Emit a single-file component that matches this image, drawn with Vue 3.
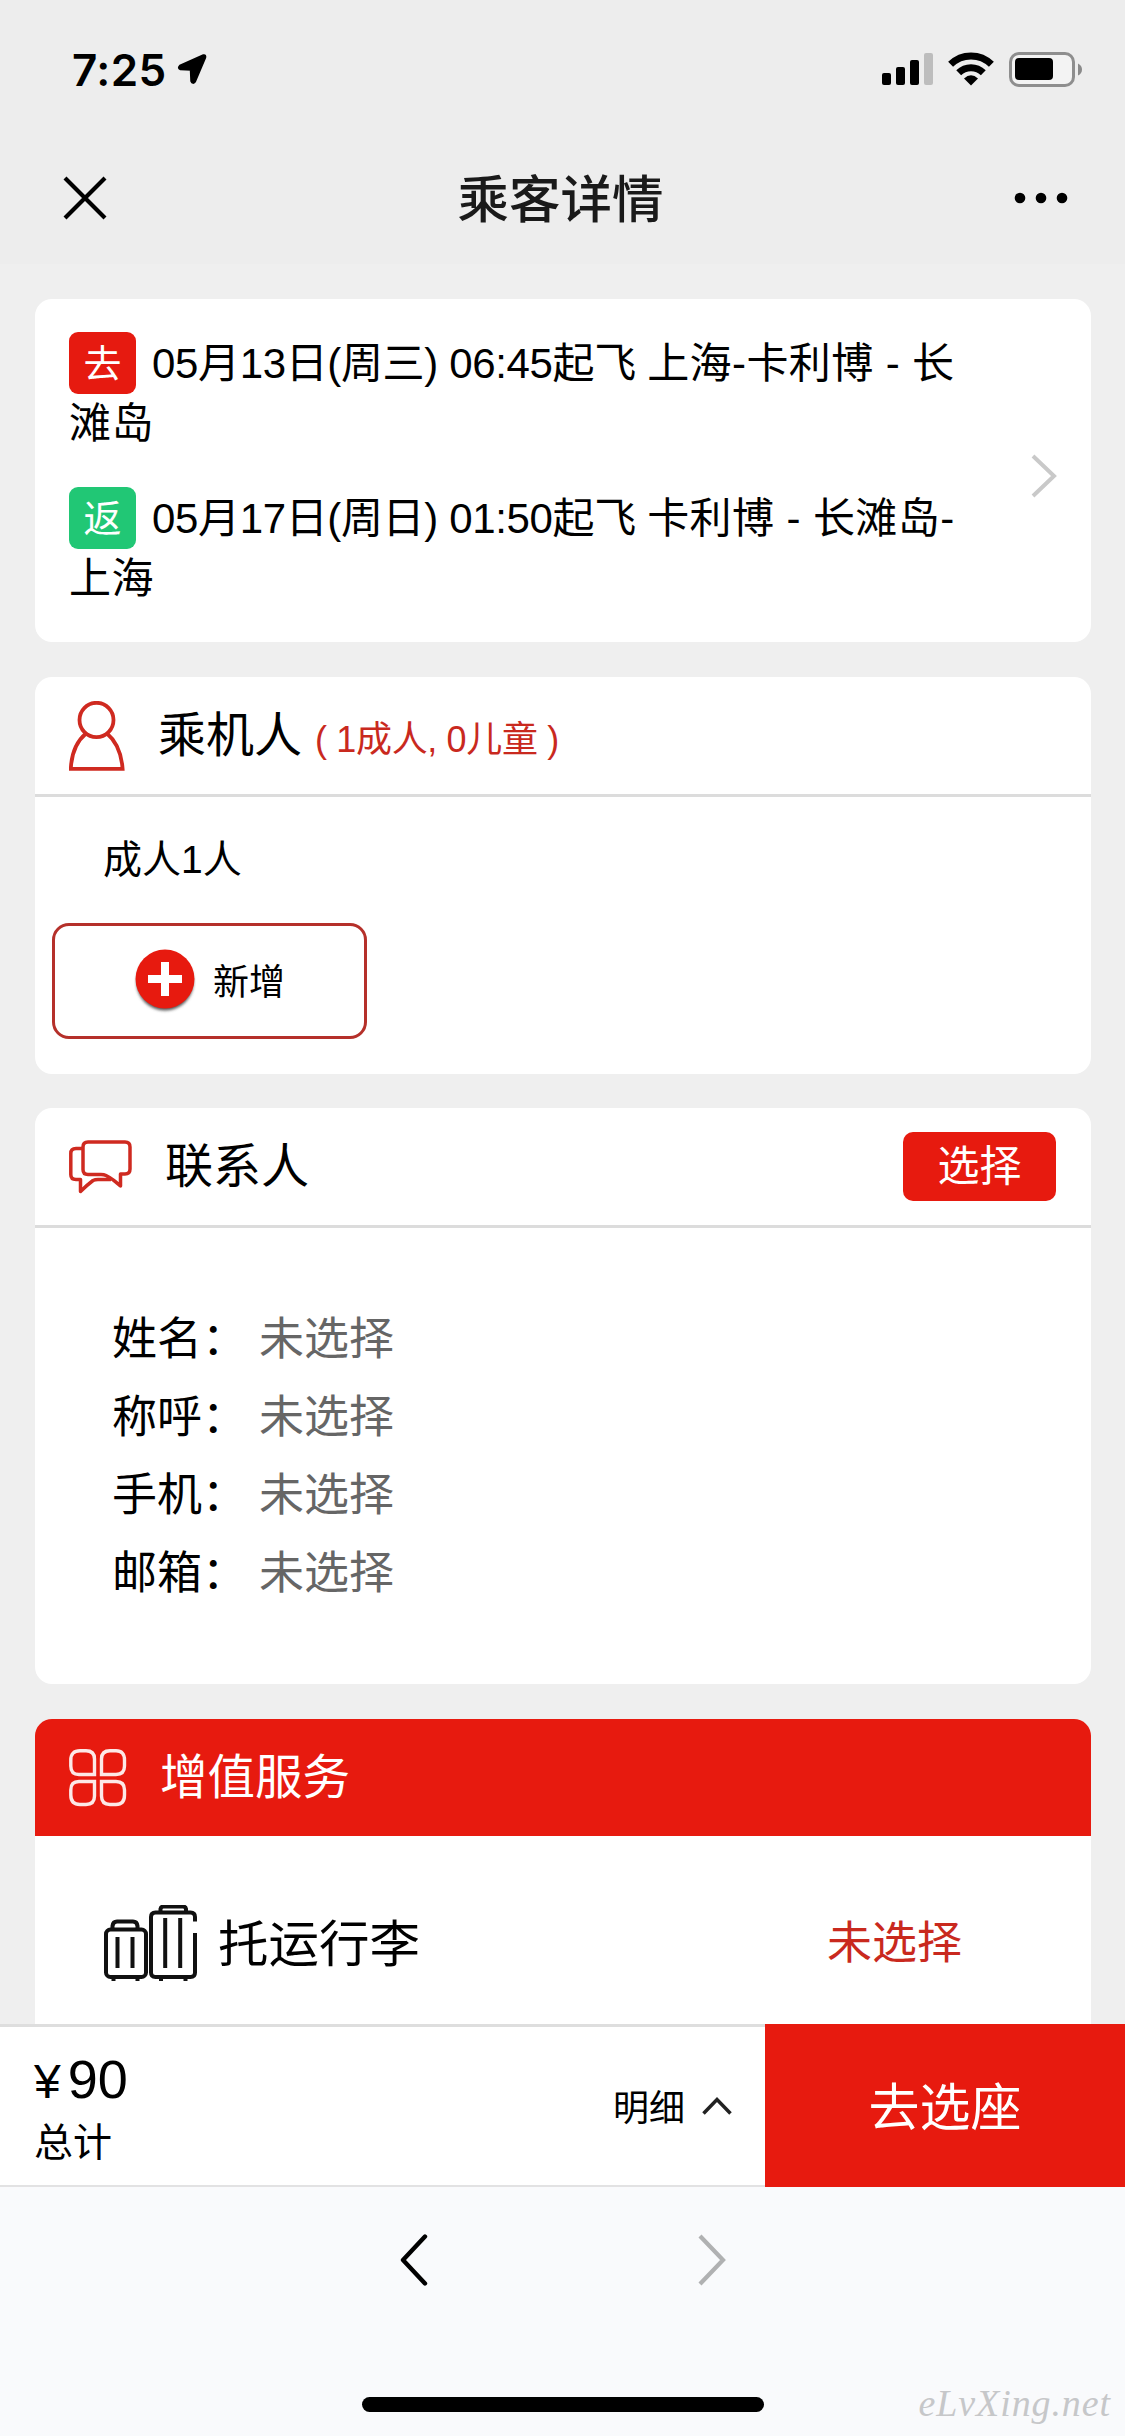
<script setup>
const flights = [
  { tag: '去', kind: 'out', time: '05月13日(周三) 06:45起飞 ', route: '上海-卡利博 - 长滩岛' },
  { tag: '返', kind: 'back', time: '05月17日(周日) 01:50起飞 ', route: '卡利博 - 长滩岛-上海' },
]
const contactRows = ['姓名', '称呼', '手机', '邮箱']
</script>

<template>
  <div class="screen">
    <header class="top">
      <div class="status">
        <div class="status-left">
          <span class="time">7:25</span>
          <svg class="locate" width="30" height="32" viewBox="0 0 30 32">
            <path d="M26.5 2.5 L3 13 Q1 15.2 3.5 16 L14 16.500 L14.500 28 Q15.800 31 17.800 28.500 L28 4.500 Q28.500 2 26.500 2.500Z" fill="#000" stroke="#000" stroke-width="2.500" stroke-linejoin="round" />
          </svg>
        </div>
        <div class="status-right">
          <svg width="52" height="34" viewBox="0 0 52 34">
            <rect x="0" y="21" width="9" height="12" rx="2" />
            <rect x="14" y="15" width="9" height="18" rx="2" />
            <rect x="28" y="8" width="9" height="25" rx="2" />
            <rect x="42" y="1" width="9" height="32" rx="2" fill="#bdbdbd" />
          </svg>
          <svg class="wifi" width="46" height="34" viewBox="0 0 46 34">
            <g fill="none" stroke="#000" stroke-width="7">
              <path d="M2.600 12.300 A29 29 0 0 1 43.400 12.300" />
              <path d="M10.700 20.800 A17.600 17.600 0 0 1 35.300 20.800" />
            </g>
            <path d="M23 33.500 L16 26.500 Q23 20 30 26.500Z" />
          </svg>
          <svg width="74" height="36" viewBox="0 0 74 36">
            <rect x="1.500" y="1.500" width="63" height="32" rx="8.500" fill="#f3f3f3" stroke="#8e8e8e" stroke-width="3" />
            <rect x="6" y="6" width="38" height="22" rx="4" />
            <path d="M69 11.500 Q73 13.500 73 17.500 T69 23.500Z" fill="#8a8a8a" />
          </svg>
        </div>
      </div>
      <div class="nav">
        <svg width="44" height="44" viewBox="0 0 44 44">
          <path d="M2 2 L42 42 M42 2 L2 42" stroke="#000" stroke-width="4.200" />
        </svg>
        <h1>乘客详情</h1>
        <svg width="54" height="12" viewBox="0 0 54 12">
          <circle cx="6" cy="6" r="5.300" /><circle cx="27" cy="6" r="5.300" /><circle cx="48" cy="6" r="5.300" />
        </svg>
      </div>
    </header>

    <main class="content">
      <section class="card flights">
        <div class="legs">
          <p v-for="f in flights" :key="f.tag" class="leg">
            <span class="tag" :class="f.kind">{{ f.tag }}</span><span class="when">{{ f.time }}</span><span class="route">{{ f.route }}</span>
          </p>
        </div>
        <svg class="more" width="26" height="44" viewBox="0 0 26 44">
          <path d="M2 2 L23 22 L2 42" fill="none" stroke="#c9c9c9" stroke-width="4" />
        </svg>
      </section>

      <section class="card passengers">
        <div class="head">
          <svg class="icon-person" width="56" height="70" viewBox="0 0 56 70" fill="none" stroke="#cf2a20" stroke-width="3.800">
            <ellipse cx="27.500" cy="19" rx="17" ry="17.200" />
            <path d="M17 32.500 C8 40 2.500 53 1.800 67.800 H53.600 C52.500 53 47 40 38 32.500" />
          </svg>
          <h2>乘机人</h2>
          <span class="count">( 1成人, 0儿童 )</span>
        </div>
        <p class="group">成人1人</p>
        <button class="add">
          <svg width="62" height="66" viewBox="0 0 62 66">
            <defs>
              <filter id="soft" x="-20%" y="-20%" width="140%" height="140%"><feGaussianBlur stdDeviation="1.500" /></filter>
            </defs>
            <circle cx="31" cy="34" r="28.500" fill="#555" filter="url(#soft)" />
            <circle cx="31" cy="31" r="29.500" fill="#e71a0f" />
            <path d="M31 14 V48 M14 31 H48" stroke="#fff" stroke-width="8" />
          </svg>
          <span>新增</span>
        </button>
      </section>

      <section class="card contact">
        <div class="head">
          <svg class="icon-chat" width="64" height="54" viewBox="0 0 64 54" fill="none" stroke="#cf2a20" stroke-width="3.500" stroke-linejoin="round">
            <path d="M19 2 H56 Q61 2 61 7 V29 Q61 34 56 34 H51.500 V46 Q44 39 37 35.500 Q35 34.500 32 34.500 H19 Q14 34.500 14 29.500 V7 Q14 2 19 2Z" />
            <path d="M14 8.500 H7 Q1.800 8.500 1.800 13.500 V34.500 Q1.800 39.500 7 39.500 H11.500 V51.500 Q18 45 24 40.500 Q26 39.500 29 39.500 H42" />
          </svg>
          <h2>联系人</h2>
          <button class="pick">选择</button>
        </div>
        <dl>
          <div v-for="r in contactRows" :key="r" class="row">
            <dt>{{ r }}：</dt>
            <dd>未选择</dd>
          </div>
        </dl>
      </section>

      <section class="card extras">
        <div class="head red">
          <svg class="icon-grid" width="58" height="58" viewBox="0 0 58 58" fill="none" stroke="#fff" stroke-width="3.400" stroke-opacity=".9">
            <path d="M11 1.800 H17 Q25.500 1.800 25.500 10 V25.500 H10 Q1.800 25.500 1.800 17 V11 Q1.800 1.800 11 1.800Z" />
            <path d="M47 1.800 H41 Q32.500 1.800 32.500 10 V25.500 H47 Q55.500 25.500 55.500 17 V11 Q55.500 1.800 47 1.800Z" />
            <path d="M11 55.500 H17 Q25.500 55.500 25.500 47 V32.500 H10 Q1.800 32.500 1.800 41 V46 Q1.800 55.500 11 55.500Z" />
            <path d="M47 55.500 H41 Q32.500 55.500 32.500 47 V32.500 H47 Q55.500 32.500 55.500 41 V46 Q55.500 55.500 47 55.500Z" />
          </svg>
          <h2>增值服务</h2>
        </div>
        <div class="baggage">
          <svg width="94" height="76" viewBox="0 0 94 76" fill="none" stroke="#111" stroke-width="4">
            <rect x="2" y="24.500" width="40" height="47.500" rx="4.500" />
            <path d="M8.500 24 V21 Q9 16.500 13 16.500 H29 Q33 16.500 33.500 21 V24 M13.500 32 V63 M28.500 32 V63 M9.500 73 V76 M33.500 73 V76" />
            <path d="M91 16.500 V12 Q91 7.500 86.500 7.500 H51.500 Q47 7.500 47 12 V67.500 Q47 72 51.500 72 H86.500 Q91 72 91 67.500 V28" />
            <path d="M56.500 7 V4 Q57 1.500 59.500 1.500 H79 Q81.500 1.500 82 4 V7 M61.200 13 V63 M76.200 13 V63 M57 73 V76 M81.500 73 V76" />
          </svg>
          <span class="name">托运行李</span>
          <span class="state">未选择</span>
        </div>
      </section>
    </main>

    <footer class="pay">
      <div class="total">
        <div class="price"><span>¥</span>90</div>
        <div class="label">总计</div>
      </div>
      <div class="detail">
        <span>明细</span>
        <svg width="30" height="20" viewBox="0 0 30 20">
          <path d="M1.500 17.500 L15 3.500 L28.500 17.500" fill="none" stroke="#222" stroke-width="3.500" />
        </svg>
      </div>
      <button class="seat">去选座</button>
    </footer>

    <div class="browser">
      <div class="arrows">
        <svg width="28" height="52" viewBox="0 0 28 52">
          <path d="M25 2.500 L3 26 L25 49.500" fill="none" stroke="#000" stroke-width="4.400" stroke-linecap="round" stroke-linejoin="round" />
        </svg>
        <svg width="28" height="52" viewBox="0 0 28 52">
          <path d="M2 2 L25 26 L2 50" fill="none" stroke="#b0b1b2" stroke-width="4.200" />
        </svg>
      </div>
      <div class="home"></div>
      <div class="mark">eLvXing.net</div>
    </div>
  </div>
</template>

<style>
body { background: #efefef; }
</style>

<style scoped>
.screen {
  width: 1125px; height: 2436px; overflow: hidden;
  display: flex; flex-direction: column;
  background: #efefef; color: #000;
  font-family: "Liberation Sans", "Noto Sans CJK SC", sans-serif;
}
svg { display: block; flex: none; }
h1, h2, p, dl, dd, dt { margin: 0; font-weight: 400; }
button { font: inherit; border: 0; padding: 0; }

.top { height: 264px; background: #ededed; flex: none; }
.status { height: 132px; display: flex; justify-content: space-between; padding: 0 42px 0 72px; }
.status-left { display: flex; padding-top: 43px; }
.time { font: 600 44px/54px Inter, sans-serif; width: 104px; letter-spacing: .4px; white-space: nowrap; }
.locate { margin: 10px 0 0 1px; }
.status-right { display: flex; padding-top: 52px; }
.wifi { margin: 0 15px 0 14px; }
.nav { height: 132px; display: flex; align-items: center; justify-content: space-between; padding: 0 57px 0 63px; }
h1 { font-size: 51.5px; line-height: 60px; padding-top: 4px; font-weight: 500; color: #1a1a1a; }

.content { flex: 1; min-height: 0; overflow: hidden; padding: 35px 34px 0 35px; display: flex; flex-direction: column; gap: 35px; }
.card { flex: none; background: #fff; border-radius: 17px; overflow: hidden; }

.flights { height: 343px; display: flex; align-items: center; justify-content: space-between; padding: 0 34px; }
.legs { width: 900px; display: flex; flex-direction: column; gap: 32px; height: 277px; }
.leg { font-size: 42px; line-height: 60px; height: 123px; }
.tag {
  display: inline-block; overflow: hidden; width: 67px; height: 62px; line-height: 64px; margin-right: 16px;
  border-radius: 9px; text-align: center; color: #fff; font-size: 38px; vertical-align: -16px;
}
.when { letter-spacing: -.35px; }
.route { letter-spacing: .4px; }
.out { background: #e61a10; }
.back { background: #21c775; }
.more { margin-top: 11px; }

.head { height: 117px; display: flex; align-items: center; padding: 0 35px 0 34px; border-bottom: 3px solid #dcdcdc; }
h2 { font-size: 48px; line-height: 60px; }
.passengers { height: 397px; }
.passengers h2 { margin-left: 33px; }
.count { margin: 8px 0 0 13px; font-size: 36px; line-height: 50px; letter-spacing: -.35px; color: #c9291e; }
.group { margin: 33px 0 0 68px; font-size: 39px; line-height: 60px; }
.add {
  box-sizing: border-box; width: 315px; height: 116px; margin: 33px 0 0 17px; background: #fff;
  border: 3px solid #b5302a; border-radius: 17px; display: flex; align-items: center; padding-left: 79px; color: #000;
}
.add span { font-size: 36px; margin-left: 17px; line-height: 50px; padding-top: 3px; }

.contact { height: 576px; margin-top: -1px; }
.contact h2 { margin-left: 32px; }
.pick { margin-left: auto; width: 153px; height: 69px; border-radius: 10px; background: #e71a0f; color: #fff; font-size: 42px; line-height: 69px; }
dl { padding: 73px 0 0 77px; }
.row { display: flex; height: 78px; line-height: 78px; font-size: 45px; gap: 12px; }
dd { color: #666; }

.extras { height: 500px; }
.red { background: #e71a0f; color: #fff; border: 0; }
.red h2 { margin-left: 33px; font-size: 47.5px; }
.baggage { height: 214px; display: flex; align-items: center; padding: 0 129px 0 69px; }
.name { font-size: 50.5px; margin-left: 20px; line-height: 60px; padding-top: 4px; }
.state { margin-left: auto; font-size: 45px; line-height: 60px; padding-top: 2px; color: #c9291e; }

.pay { height: 163px; flex: none; display: flex; background: #fff; }
.total, .detail { border-top: 3px solid #dedede; border-bottom: 2px solid #e2e2e3; box-sizing: border-box; height: 163px; }
.total { flex: 1; padding: 21px 0 0 34px; }
.price { font-size: 54px; line-height: 62px; }
.price span { font-size: 48px; margin-right: 7px; }
.label { font-size: 39px; line-height: 59px; }
.detail { width: 152px; display: flex; align-items: center; gap: 17px; font-size: 36px; }
.detail span { padding-bottom: 3px; }
.seat { width: 360px; background: #e71a0f; color: #fff; font-size: 51px; line-height: 163px; padding-top: 3px; height: 163px; overflow: hidden; }

.browser { height: 249px; flex: none; background: #f9fafc; position: relative; display: flex; flex-direction: column; align-items: center; }
.arrows { display: flex; gap: 270px; padding-top: 47px; height: 163px; }
.home { width: 402px; height: 15px; border-radius: 8px; background: #000; }
.mark {
  position: absolute; right: 14px; bottom: 11px; color: #c6c7c9; white-space: nowrap;
  font: italic 38px/44px "Liberation Serif", serif; letter-spacing: .9px;
}
</style>
